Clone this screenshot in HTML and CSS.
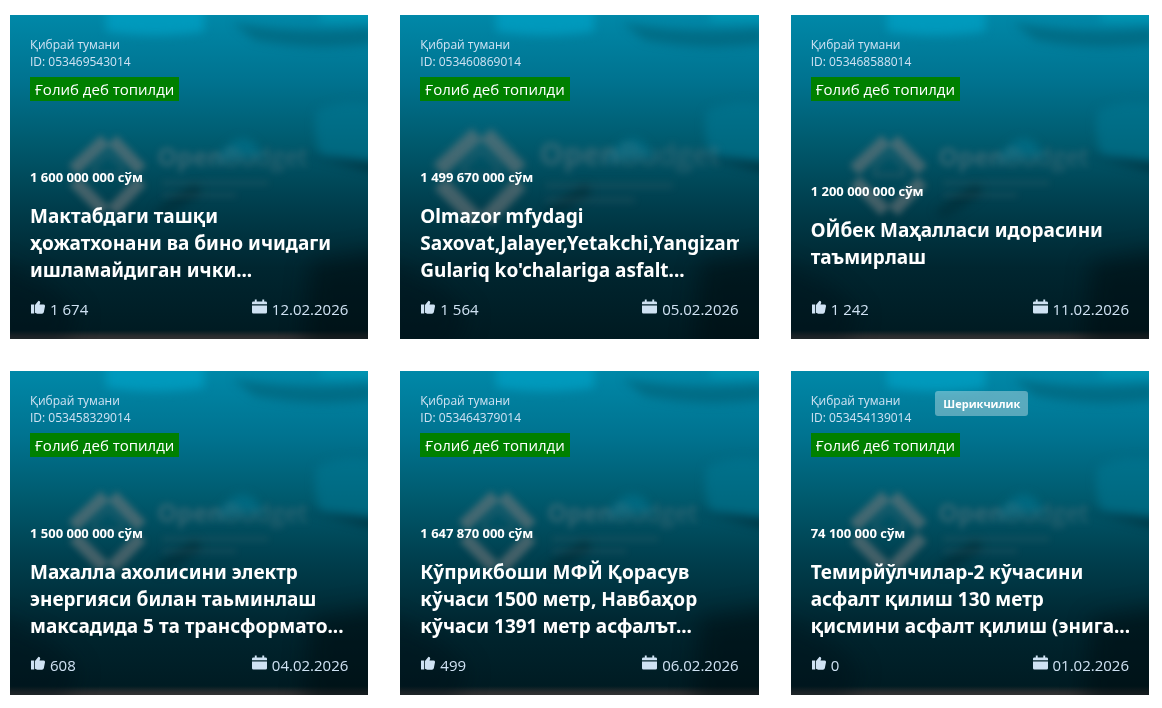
FILE: index.html
```html
<!DOCTYPE html>
<html lang="uz">
<head>
    <meta charset="UTF-8">
    <meta name="viewport" content="width=device-width, initial-scale=1.0">
    <title>Ғолиб лойиҳалар</title>
    <link rel="stylesheet" href="styles.css">
</head>
<body>
    <!-- shared drawings: card cover and the two icons -->
    <svg class="sprite" aria-hidden="true" xmlns="http://www.w3.org/2000/svg">
        <defs>
            <filter id="soft" x="-20%" y="-20%" width="140%" height="140%" color-interpolation-filters="sRGB"><feGaussianBlur stdDeviation="3" /></filter>
            <filter id="mist" x="-20%" y="-30%" width="140%" height="160%" color-interpolation-filters="sRGB"><feGaussianBlur stdDeviation="5" /></filter>
            <filter id="haze" x="-40%" y="-80%" width="180%" height="260%" color-interpolation-filters="sRGB"><feGaussianBlur stdDeviation="11" /></filter>
        </defs>
        <symbol id="shapes" viewBox="0 0 358 324" preserveAspectRatio="none">
            <g filter="url(#mist)">
                <path d="M96-14h98v30q-48 8-98 0z" fill="#00a0c4" opacity="0.75" />
                <path d="M222 8q70 12 140 5v16q-60 8-118-4z" fill="#00586b" opacity="0.5" />
                <path d="M310-10h60v16h-60z" fill="#00a0bc" opacity="0.6" />
                <path d="M306 96q26-14 64-6v60q-40 0-60-10-8-20-4-44z" fill="#007a96" opacity="0.5" />
                <path d="M204 146q30-44 50-4z" fill="#007a96" opacity="0.5" />
                <path d="M296 140l80 8v12z" fill="#002833" opacity="0.7" />
                <path d="M144 196q26-20 42-28l6 10q-20 16-40 26z" fill="#002b36" opacity="0.6" />
            </g>
            <g filter="url(#haze)">
                <path d="M-20 244l60 26 30 30-20 40h-70z" fill="#001016" opacity="0.4" />
                <path d="M300 248l90-16v120h-100z" fill="#000c10" opacity="0.55" />
            </g>
        </symbol>
        <symbol id="brand" viewBox="0 0 358 324">
            <g filter="url(#soft)">
                <g fill="none" stroke="#7b7b7d" stroke-width="13" opacity="0.55">
                    <path d="M95 125L63 155M102 125l29 30M64 166l30 30M131 166l-29 30" />
                    <path d="M84 160v-8l14-14 14 14v8z" stroke-width="4" opacity="0.4" />
                </g>
                <text class="brand-open" x="147" y="151">Open<tspan class="brand-budget">Budget</tspan></text>
                <path d="M152 168h106M152 180h74" stroke="#506a72" stroke-width="4" opacity="0.25" />
            </g>
        </symbol>
        <symbol id="icon-like" viewBox="0 0 15 15">
            <path d="M1 5h3.200v9H1zM5 5.500L8.500 1.200q2.300.200 1.500 2.600L9.500 5h4q1.700.100 1.500 1.800l-1.200 6q-.400 1.400-1.800 1.400H7.200L5 13.300z" />
        </symbol>
        <symbol id="icon-date" viewBox="0 0 16 16">
            <path d="M3 0h2v2h6V0h2v2h1.500Q16 2 16 3.500V5H0V3.500Q0 2 1.500 2H3zM0 6.500h16v7q0 1.500-1.500 1.500h-13Q0 15 0 13.500z" />
        </symbol>
    </svg>

    <main class="cards">
        <article class="card">
            <svg class="cover" aria-hidden="true"><use href="#shapes" /><use href="#brand" /></svg>
            <header class="card-head">
                <div class="place">
                    <div>Қибрай тумани</div>
                    <div>ID: 053469543014</div>
                </div>
                <span class="status">Ғолиб деб топилди</span>
            </header>
            <div class="card-body">
                <div class="price">1 600 000 000 сўм</div>
                <h2 class="title">Мактабдаги ташқи<br>ҳожатхонани ва бино ичидаги<br>ишламайдиган ички...</h2>
            </div>
            <footer class="card-foot">
                <span class="meta"><svg class="icon" aria-hidden="true"><use href="#icon-like" /></svg>1 674</span>
                <span class="meta"><svg class="icon" aria-hidden="true"><use href="#icon-date" /></svg>12.02.2026</span>
            </footer>
        </article>

        <article class="card plain">
            <svg class="cover" aria-hidden="true"><use href="#shapes" /><use class="brand-large" href="#brand" /></svg>
            <header class="card-head">
                <div class="place">
                    <div>Қибрай тумани</div>
                    <div>ID: 053460869014</div>
                </div>
                <span class="status">Ғолиб деб топилди</span>
            </header>
            <div class="card-body">
                <div class="price">1 499 670 000 сўм</div>
                <h2 class="title">Olmazor mfydagi<br>Saxovat,Jalayer,Yetakchi,Yangizam<br>Gulariq ko'chalariga asfalt...</h2>
            </div>
            <footer class="card-foot">
                <span class="meta"><svg class="icon" aria-hidden="true"><use href="#icon-like" /></svg>1 564</span>
                <span class="meta"><svg class="icon" aria-hidden="true"><use href="#icon-date" /></svg>05.02.2026</span>
            </footer>
        </article>

        <article class="card">
            <svg class="cover" aria-hidden="true"><use href="#shapes" /><use href="#brand" /></svg>
            <header class="card-head">
                <div class="place">
                    <div>Қибрай тумани</div>
                    <div>ID: 053468588014</div>
                </div>
                <span class="status">Ғолиб деб топилди</span>
            </header>
            <div class="card-body">
                <div class="price">1 200 000 000 сўм</div>
                <h2 class="title">ОЙбек Маҳалласи идорасини<br>таъмирлаш</h2>
            </div>
            <footer class="card-foot">
                <span class="meta"><svg class="icon" aria-hidden="true"><use href="#icon-like" /></svg>1 242</span>
                <span class="meta"><svg class="icon" aria-hidden="true"><use href="#icon-date" /></svg>11.02.2026</span>
            </footer>
        </article>

        <article class="card">
            <svg class="cover" aria-hidden="true"><use href="#shapes" /><use href="#brand" /></svg>
            <header class="card-head">
                <div class="place">
                    <div>Қибрай тумани</div>
                    <div>ID: 053458329014</div>
                </div>
                <span class="status">Ғолиб деб топилди</span>
            </header>
            <div class="card-body">
                <div class="price">1 500 000 000 сўм</div>
                <h2 class="title">Махалла ахолисини электр<br>энергияси билан таьминлаш<br>максадида 5 та трансформато...</h2>
            </div>
            <footer class="card-foot">
                <span class="meta"><svg class="icon" aria-hidden="true"><use href="#icon-like" /></svg>608</span>
                <span class="meta"><svg class="icon" aria-hidden="true"><use href="#icon-date" /></svg>04.02.2026</span>
            </footer>
        </article>

        <article class="card">
            <svg class="cover" aria-hidden="true"><use href="#shapes" /><use href="#brand" /></svg>
            <header class="card-head">
                <div class="place">
                    <div>Қибрай тумани</div>
                    <div>ID: 053464379014</div>
                </div>
                <span class="status">Ғолиб деб топилди</span>
            </header>
            <div class="card-body">
                <div class="price">1 647 870 000 сўм</div>
                <h2 class="title">Кўприкбоши МФЙ Қорасув<br>кўчаси 1500 метр, Навбаҳор<br>кўчаси 1391 метр асфалът...</h2>
            </div>
            <footer class="card-foot">
                <span class="meta"><svg class="icon" aria-hidden="true"><use href="#icon-like" /></svg>499</span>
                <span class="meta"><svg class="icon" aria-hidden="true"><use href="#icon-date" /></svg>06.02.2026</span>
            </footer>
        </article>

        <article class="card">
            <svg class="cover" aria-hidden="true"><use href="#shapes" /><use href="#brand" /></svg>
            <header class="card-head">
                <div class="head-row">
                    <div class="place">
                        <div>Қибрай тумани</div>
                        <div>ID: 053454139014</div>
                    </div>
                    <span class="tag">Шерикчилик</span>
                </div>
                <span class="status">Ғолиб деб топилди</span>
            </header>
            <div class="card-body">
                <div class="price">74 100 000 сўм</div>
                <h2 class="title">Темирйўлчилар-2 кўчасини<br>асфалт қилиш 130 метр<br>қисмини асфалт қилиш (энига...</h2>
            </div>
            <footer class="card-foot">
                <span class="meta"><svg class="icon" aria-hidden="true"><use href="#icon-like" /></svg>0</span>
                <span class="meta"><svg class="icon" aria-hidden="true"><use href="#icon-date" /></svg>01.02.2026</span>
            </footer>
        </article>
    </main>
</body>
</html>
```

FILE: styles.css
```css
* {
    box-sizing: border-box;
}
body {
    margin: 0;
    background: #fff;
    color: #fff;
    font-family: 'Segoe UI', 'Open Sans', 'Noto Sans', sans-serif;
}
.sprite {
    position: absolute;
    width: 0;
    height: 0;
}
.sprite symbol {
    overflow: visible;
}
.cards {
    display: grid;
    grid-template-columns: repeat(3, minmax(0, 1fr));
    gap: 32px;
    padding: 15px 13px 13px 10px;
}
.card {
    position: relative;
    display: flex;
    flex-direction: column;
    min-height: 324px;
    padding: 20px;
    overflow: hidden;
    background:
        linear-gradient(to top, #323334, #2a2d2f 3px, transparent 9px),
        linear-gradient(#0088a8, #007390 20%, #005c70 38%, #003f4e 58%, #002630 78%, #001a21);
}
.card.plain {
    background: linear-gradient(#0088a8, #007390 20%, #005c70 38%, #003f4e 58%, #002630 78%, #001a21);
}
/* the cover sits behind everything in the card */
.cover {
    position: absolute;
    top: 0;
    left: 0;
    width: 100%;
    height: 100%;
}
.brand-open {
    font-size: 25px;
    font-weight: bold;
    fill: #667d84;
    opacity: 0.5;
}
.brand-budget {
    font-weight: normal;
}
.brand-large {
    transform: translate(-37px, -31px) scale(1.2);
}
.card-head,
.card-body,
.card-foot {
    position: relative;
}
.card-head {
    margin-bottom: 52px;
}
.head-row {
    display: flex;
    align-items: flex-start;
    gap: 24px;
}
.place {
    padding-top: 1px;
    color: #cfe2f3;
    font-size: 12px;
    line-height: 17px;
}
.status {
    display: inline-block;
    margin-top: 7px;
    padding: 0 5px;
    background: #008000;
    font-size: 15px;
    line-height: 24px;
}
.tag {
    padding: 0 8px;
    border-radius: 3px;
    background: rgba(255, 255, 255, 0.35);
    font-size: 11px;
    font-weight: bold;
    line-height: 25px;
}
.card-body {
    margin-top: auto;
    margin-bottom: auto;
}
.price {
    margin-bottom: 17px;
    font-size: 13px;
    font-weight: bold;
    line-height: 18px;
}
.title {
    margin: 0;
    overflow: hidden;
    font-family: 'Segoe UI', 'Noto Sans', sans-serif;
    font-size: 19px;
    font-weight: bold;
    line-height: 27px;
    white-space: nowrap;
}
.card-foot {
    display: flex;
    justify-content: space-between;
    color: #cfe2f3;
    font-size: 15px;
    line-height: 20px;
}
.meta {
    display: flex;
    gap: 5px;
}
.icon {
    width: 15px;
    height: 16px;
    fill: #cfe2f3;
}
```
